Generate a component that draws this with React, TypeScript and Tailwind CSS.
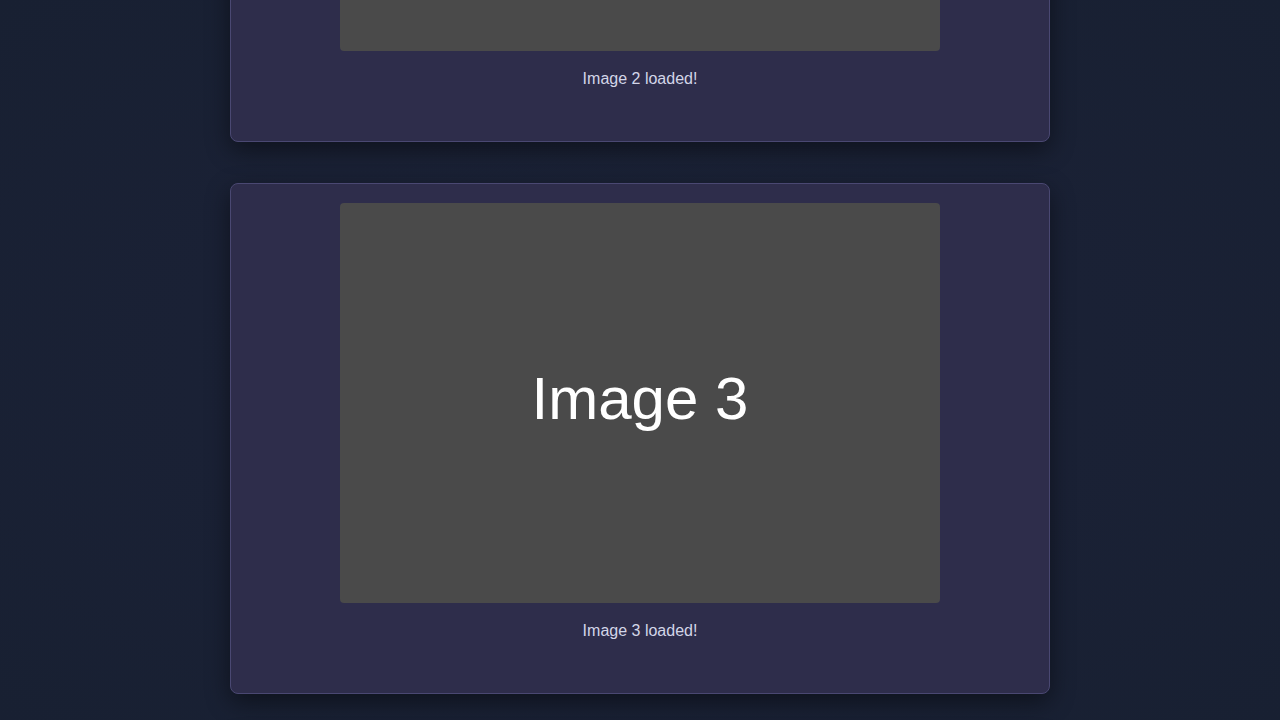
import { useLayoutEffect } from "react";

const images = [1, 2, 3, 4];

const LazyCard = ({ n }: { n: number }) => (
  <div className="w-[820px] rounded-lg border border-[#4a4872] bg-[#2e2d4b] px-5 pt-[19px] pb-[50px] shadow-[0_8px_24px_rgba(0,0,0,0.45)]">
    <div className="mx-auto flex h-[400px] w-[600px] items-center justify-center rounded bg-[#4a4a4a]">
      <span className="pb-2 text-6xl leading-none text-white">Image {n}</span>
    </div>
    <p className="mt-4 text-center text-base leading-6 text-[#d3d6e8]">Image {n} loaded!</p>
  </div>
);

export default function App() {
  // jump to the third card, like the user scrolled down the list
  useLayoutEffect(() => {
    window.scrollTo(0, 961);
  }, []);

  return (
    <div className="min-h-screen bg-[#1a2034] bg-[radial-gradient(ellipse_at_center,#1b2337_0%,#1a2135_50%,#182032_100%)] bg-fixed font-['Liberation_Sans',Arial,sans-serif]">
      <div className="flex flex-col items-center gap-[41px] py-10">
        {images.map((n) => (
          <LazyCard key={n} n={n} />
        ))}
      </div>
    </div>
  );
}
